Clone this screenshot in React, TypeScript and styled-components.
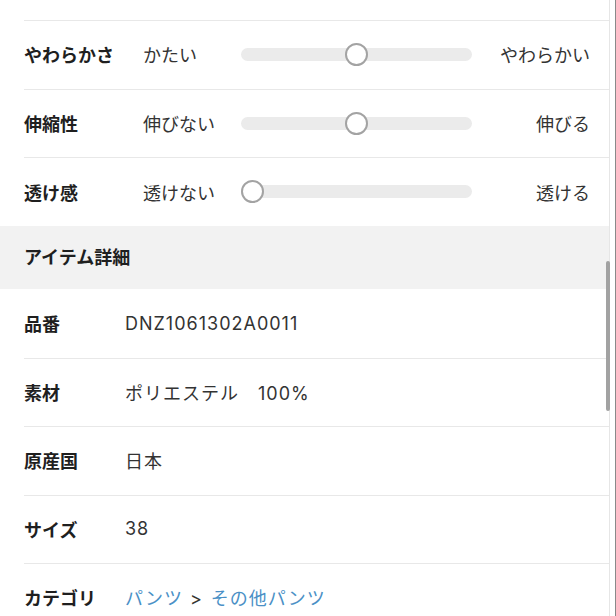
import React from "react";
import styled, { createGlobalStyle } from "styled-components";

const Global = createGlobalStyle`
  html, body { margin: 0; padding: 0; background: #fff; }
  body { font-family: Inter, "Noto Sans CJK JP", sans-serif; color: #222; }
  * { box-sizing: border-box; }
`;

const Frame = styled.div`
  position: relative;
  width: 616px;
  height: 616px;
  overflow: hidden;
  display: grid;
  grid-template-columns: 610px 6px;
`;

const Content = styled.div`
  display: flex;
  flex-direction: column;
  border-right: 1px solid #e6e6e6;
`;

const Gutter = styled.div`
  border-right: 1.5px solid #8a8a8a;
`;

const ScrollThumb = styled.div`
  position: absolute;
  left: 606px;
  top: 261px;
  width: 4px;
  height: 150px;
  border-radius: 2px;
  background: #a2a2a2;
`;

const TopStub = styled.div`
  height: 20px;
  flex: none;
`;

const Row = styled.div<{ $h: number; $divider?: boolean }>`
  position: relative;
  flex: none;
  height: ${(p) => p.$h}px;
  display: flex;
  align-items: center;
  padding: 0 19px 0 24px;
  ${(p) =>
    p.$divider
      ? `&::before { content: ""; position: absolute; left: 24px; right: 0; top: 0; height: 1px; background: #e8e8e8; }`
      : ""}
`;

const Label = styled.div<{ $w: number }>`
  flex: none;
  width: ${(p) => p.$w}px;
  font-size: 18px;
  font-weight: 700;
  color: #1f1f1f;
  white-space: nowrap;
`;

const MinLabel = styled.div`
  flex: none;
  width: 98px;
  font-size: 18px;
  color: #333;
  white-space: nowrap;
`;

const MaxLabel = styled.div`
  flex: 1;
  text-align: right;
  font-size: 18px;
  color: #333;
  white-space: nowrap;
`;

const Track = styled.div`
  position: relative;
  flex: none;
  width: 231px;
  height: 13px;
  border-radius: 7px;
  background: #ebebeb;
`;

const Thumb = styled.div`
  position: absolute;
  top: 50%;
  width: 23px;
  height: 23px;
  margin-top: -11.5px;
  border-radius: 50%;
  background: #fff;
  border: 2px solid #a3a3a3;
`;

const SectionHeader = styled.div`
  flex: none;
  height: 63px;
  background: #f2f2f2;
  display: flex;
  align-items: center;
  padding: 0 0 3px 24px;
  font-size: 18px;
  font-weight: 700;
  color: #1f1f1f;
`;

const Value = styled.div`
  font-size: 18px;
  color: #333;
  white-space: pre;
  letter-spacing: 1px;
`;

const Link = styled.a`
  color: #4a90c6;
  text-decoration: none;
`;

const Sep = styled.span`
  color: #333;
  margin: 0 8px 0 7px;
`;

const sliders = [
  { label: "やわらかさ", min: "かたい", max: "やわらかい", pos: 0.5 },
  { label: "伸縮性", min: "伸びない", max: "伸びる", pos: 0.5 },
  { label: "透け感", min: "透けない", max: "透ける", pos: 0 },
];

const details: { label: string; value: React.ReactNode }[] = [
  { label: "品番", value: "DNZ1061302A0011" },
  { label: "素材", value: "ポリエステル　100%" },
  { label: "原産国", value: "日本" },
  { label: "サイズ", value: "38" },
  {
    label: "カテゴリ",
    value: (
      <>
        <Link href="#">パンツ</Link>
        <Sep>&gt;</Sep>
        <Link href="#">その他パンツ</Link>
      </>
    ),
  },
];

export default function App() {
  return (
    <>
      <Global />
      <Frame>
        <Content>
          <TopStub />
          {sliders.map((s) => (
            <Row key={s.label} $h={68.7} $divider>
              <Label $w={119}>{s.label}</Label>
              <MinLabel>{s.min}</MinLabel>
              <Track>
                <Thumb style={{ left: `${s.pos * 231 - (s.pos > 0 ? 11.5 : 0)}px` }} />
              </Track>
              <MaxLabel>{s.max}</MaxLabel>
            </Row>
          ))}
          <SectionHeader>アイテム詳細</SectionHeader>
          {details.map((d, i) => (
            <Row key={d.label} $h={68.5} $divider={i > 0}>
              <Label $w={101}>{d.label}</Label>
              <Value>{d.value}</Value>
            </Row>
          ))}
        </Content>
        <Gutter />
        <ScrollThumb />
      </Frame>
    </>
  );
}
